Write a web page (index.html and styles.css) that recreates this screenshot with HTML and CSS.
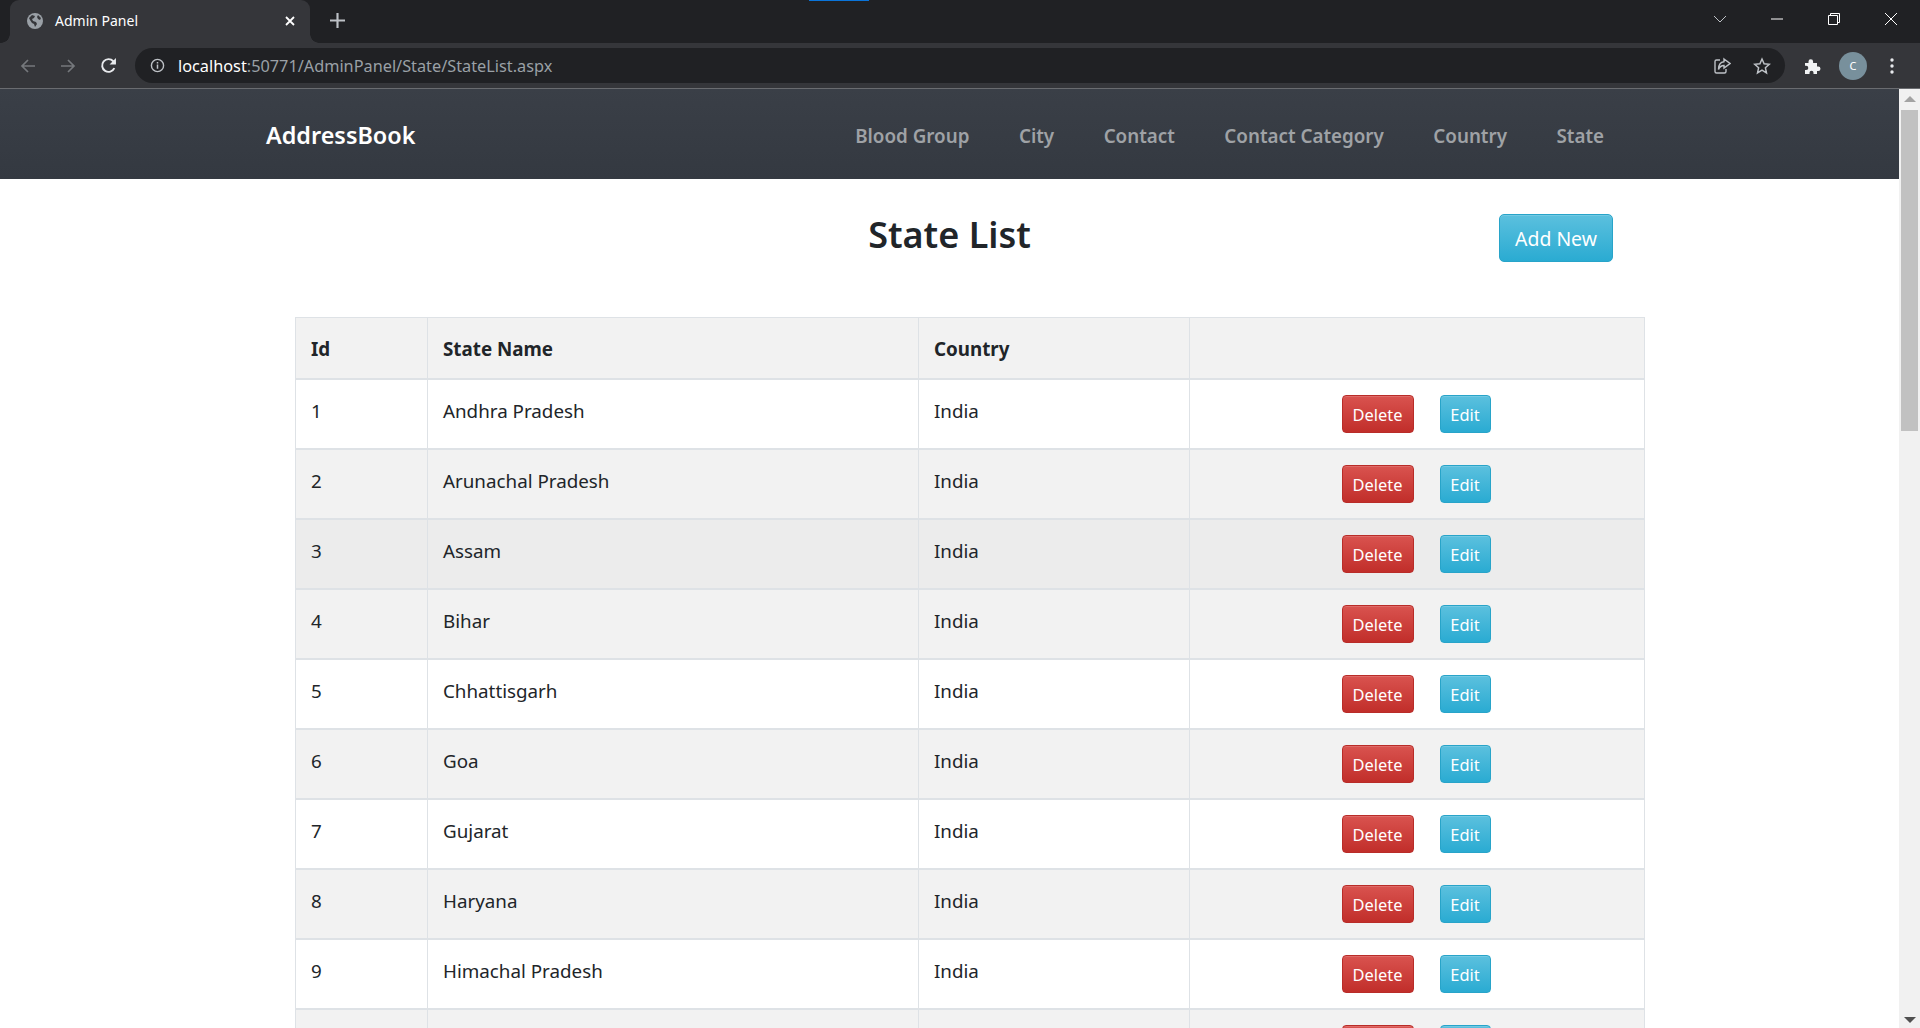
FILE: index.html
```html
<!DOCTYPE html>
<html lang="en">
<head>
<meta charset="utf-8">
<title>Admin Panel</title>
<link rel="stylesheet" href="styles.css">
</head>
<body>
<div class="browser">
  <div class="tabstrip">
    <div class="tab">
      <svg class="favicon" viewBox="0 0 16 16"><circle cx="8" cy="8" r="8" fill="#9aa0a6"/><path d="M2 5l3-3 3 1-1 2-2 1 1 2 3 1 1 2-2 3-1-3-2-1-2-3zM11 2l3 3-1 2-2-1-1-2z" fill="#35363a"/></svg>
      <span class="tab-title">Admin Panel</span>
      <svg class="tab-close" viewBox="0 0 12 12"><path d="M2 2l8 8M10 2l-8 8" stroke="#fff" stroke-width="1.8"/></svg>
    </div>
    <svg class="new-tab" viewBox="0 0 14 14"><path d="M7 0v14M0 7h14" stroke="#bdc1c6" stroke-width="2"/></svg>
    <div class="load-bar"></div>
    <div class="window-controls">
      <svg class="win chev" viewBox="0 0 14 8"><path d="M1 1l6 6 6-6" fill="none" stroke="#bdc1c6" stroke-width="1"/></svg>
      <svg class="win" viewBox="0 0 14 14"><path d="M1 7h12" stroke="#fff" stroke-width="1"/></svg>
      <svg class="win" viewBox="0 0 14 14"><path d="M3.500 3.500V1.500h9v9h-2M1.500 3.500h9v9h-9z" fill="none" stroke="#fff" stroke-width="1"/></svg>
      <svg class="win" viewBox="0 0 14 14"><path d="M1 1l12 12M13 1L1 13" stroke="#fff" stroke-width="1"/></svg>
    </div>
  </div>
  <div class="toolbar">
    <svg class="nav-icon back" viewBox="0 0 16 16"><path d="M15 8H2M8 2L2 8l6 6" fill="none" stroke="#75787c" stroke-width="1.700"/></svg>
    <svg class="nav-icon forward" viewBox="0 0 16 16"><path d="M1 8h13M8 2l6 6-6 6" fill="none" stroke="#75787c" stroke-width="1.700"/></svg>
    <svg class="nav-icon reload" viewBox="0 0 16 16"><path d="M13.500 10.500A6 6 0 1 1 12.500 4L14 5.500" fill="none" stroke="#e8eaed" stroke-width="1.800"/><path d="M15 1v6H9z" fill="#e8eaed"/></svg>
    <div class="omnibox">
      <svg class="info" viewBox="0 0 16 16"><circle cx="8" cy="8" r="6.500" fill="none" stroke="#bdc1c6" stroke-width="1.500"/><path d="M8 7v4.500M8 4.200v1.600" stroke="#bdc1c6" stroke-width="1.600"/></svg>
      <span class="url"><span class="host">localhost</span>:50771/AdminPanel/State/StateList.aspx</span>
      <svg class="omni-icon share" viewBox="0 0 18 18"><path d="M7 3H3.500A1.500 1.500 0 0 0 2 4.500v10A1.500 1.500 0 0 0 3.500 16h8a1.500 1.500 0 0 0 1.500-1.500V12" fill="none" stroke="#bdc1c6" stroke-width="1.400"/><path d="M11 2l6 4.500-6 4.500V8.500C8.500 8.500 6.500 10 5.500 12.500 5.500 8 7.500 5 11 4.700z" fill="none" stroke="#bdc1c6" stroke-width="1.400"/></svg>
      <svg class="omni-icon star" viewBox="0 0 18 18"><path d="M9 2l2.100 4.800 5.200.5-3.900 3.500 1.100 5.100L9 13.200l-4.500 2.700 1.100-5.100-3.900-3.500 5.200-.5z" fill="none" stroke="#bdc1c6" stroke-width="1.500"/></svg>
    </div>
    <svg class="puzzle" viewBox="0 0 18 18"><path d="M2 6h3.500V4.500a2.300 2.300 0 0 1 4.600 0V6h3.900v3.600h1.300a2.200 2.200 0 0 1 0 4.400H14v3H10.500v-1.300a2 2 0 0 0-4 0V17H2v-4h1.200a2.100 2.100 0 0 0 0-4.200H2z" fill="#f1f3f4"/></svg>
    <div class="avatar">C</div>
    <svg class="dots" viewBox="0 0 4 16"><circle cx="2" cy="2" r="1.700" fill="#e8eaed"/><circle cx="2" cy="8" r="1.700" fill="#e8eaed"/><circle cx="2" cy="14" r="1.700" fill="#e8eaed"/></svg>
  </div>
</div>
<div class="viewport">
  <main class="page">
    <nav class="navbar">
      <a class="brand">AddressBook</a>
      <ul class="nav-links">
        <li>Blood Group</li>
        <li>City</li>
        <li>Contact</li>
        <li>Contact Category</li>
        <li>Country</li>
        <li>State</li>
      </ul>
    </nav>
    <header class="page-head">
      <h1>State List</h1>
      <a class="btn btn-info btn-lg">Add New</a>
    </header>
    <table class="grid">
      <colgroup><col class="c-id"><col class="c-name"><col class="c-country"><col class="c-actions"></colgroup>
      <thead><tr><th>Id</th><th>State Name</th><th>Country</th><th></th></tr></thead>
      <tbody>
        <tr><td>1</td><td>Andhra Pradesh</td><td>India</td><td><div class="actions"><a class="btn btn-danger">Delete</a><a class="btn btn-info">Edit</a></div></td></tr>
        <tr><td>2</td><td>Arunachal Pradesh</td><td>India</td><td><div class="actions"><a class="btn btn-danger">Delete</a><a class="btn btn-info">Edit</a></div></td></tr>
        <tr class="hover"><td>3</td><td>Assam</td><td>India</td><td><div class="actions"><a class="btn btn-danger">Delete</a><a class="btn btn-info">Edit</a></div></td></tr>
        <tr><td>4</td><td>Bihar</td><td>India</td><td><div class="actions"><a class="btn btn-danger">Delete</a><a class="btn btn-info">Edit</a></div></td></tr>
        <tr><td>5</td><td>Chhattisgarh</td><td>India</td><td><div class="actions"><a class="btn btn-danger">Delete</a><a class="btn btn-info">Edit</a></div></td></tr>
        <tr><td>6</td><td>Goa</td><td>India</td><td><div class="actions"><a class="btn btn-danger">Delete</a><a class="btn btn-info">Edit</a></div></td></tr>
        <tr><td>7</td><td>Gujarat</td><td>India</td><td><div class="actions"><a class="btn btn-danger">Delete</a><a class="btn btn-info">Edit</a></div></td></tr>
        <tr><td>8</td><td>Haryana</td><td>India</td><td><div class="actions"><a class="btn btn-danger">Delete</a><a class="btn btn-info">Edit</a></div></td></tr>
        <tr><td>9</td><td>Himachal Pradesh</td><td>India</td><td><div class="actions"><a class="btn btn-danger">Delete</a><a class="btn btn-info">Edit</a></div></td></tr>
        <tr><td></td><td></td><td></td><td><div class="actions"><a class="btn btn-danger"></a><a class="btn btn-info"></a></div></td></tr>
      </tbody>
    </table>
  </main>
  <aside class="scrollbar">
    <span class="arrow up"></span>
    <span class="thumb"></span>
    <span class="arrow down"></span>
  </aside>
</div>
</body>
</html>
```

FILE: styles.css
```css
* { box-sizing: border-box; }
html, body { margin: 0; height: 100%; overflow: hidden; }
body {
  display: flex;
  flex-direction: column;
  height: 1028px;
  font-family: "Noto Sans", "Open Sans", sans-serif;
  color: #212529;
  background: #fff;
}

/* browser chrome */
.browser { flex: none; height: 89px; background: #35363a; border-bottom: 1px solid #6a6c70; }
.tabstrip { position: relative; height: 43px; background: #202124; display: flex; align-items: center; }
.tab {
  position: relative;
  width: 300px;
  height: 43px;
  margin-left: 10px;
  padding: 0 0 2px 17px;
  background: #35363a;
  border-radius: 9px 9px 0 0;
  display: flex;
  align-items: center;
  color: #fff;
  font-size: 14px;
}
.tab::before, .tab::after { content: ""; position: absolute; bottom: 0; width: 9px; height: 9px; }
.tab::before { left: -9px; background: radial-gradient(circle at 0 0, #202124 8.500px, #35363a 9px); }
.tab::after { right: -9px; background: radial-gradient(circle at 100% 0, #202124 8.500px, #35363a 9px); }
.favicon { width: 16px; height: 16px; }
.tab-title { margin-left: 12px; flex: 1; }
.tab-close { width: 12px; height: 12px; margin-right: 14px; }
.new-tab { width: 15px; height: 15px; margin: 0 0 2px 20px; }
.load-bar { position: absolute; left: 809px; top: 0; width: 60px; height: 1px; background: #0a74da; }
.window-controls { align-self: flex-start; margin-left: auto; display: flex; align-items: center; padding-right: 22px; gap: 43px; height: 37px; }
.win { width: 14px; height: 14px; }

.toolbar { height: 45px; display: flex; align-items: center; padding-left: 20px; }
.nav-icon { width: 16px; height: 16px; margin-right: 24px; }
.nav-icon.reload { width: 17px; height: 17px; margin-right: 18px; }
.omnibox {
  width: 1650px;
  height: 35px;
  border-radius: 18px;
  background: #202124;
  display: flex;
  align-items: center;
  padding-left: 15px;
}
.info { width: 15px; height: 15px; }
.url { margin-left: 13px; font-size: 16.3px; color: #9aa0a6; flex: 1; }
.host { color: #fff; }
.omni-icon { width: 18px; height: 18px; }
.omni-icon.share { margin-right: 22px; }
.omni-icon.star { margin-right: 14px; }
.puzzle { width: 18px; height: 18px; margin-left: 18px; }
.avatar {
  width: 28px; height: 28px; margin-left: 18px; border-radius: 50%;
  background: #78909c; color: #fff; font-size: 11px;
  display: flex; align-items: center; justify-content: center;
}
.dots { width: 4px; height: 16px; margin-left: 23px; }

/* page */
.viewport { flex: 1; display: flex; min-height: 0; }
.page { flex: 1; min-width: 0; overflow: hidden; }
.navbar {
  height: 90px;
  padding: 2px 295px 0 266px;
  background: linear-gradient(#3a3f47, #343941);
  display: flex;
  align-items: center;
  justify-content: space-between;
}
.brand { font-size: 23.4px; font-weight: 600; color: #fff; }
.nav-links { list-style: none; margin: 0; padding: 1px 0 0; display: flex; gap: 49.5px; font-size: 18.8px; font-weight: 600; color: #9fa2a6; }

.page-head {
  display: grid;
  grid-template-columns: 1fr auto 1fr;
  align-items: start;
  height: 138px;
  padding-top: 35px;
}
.page-head h1 { grid-column: 2; margin: -1px 0 0; font-size: 36px; line-height: 1.2; font-weight: 600; }
.page-head .btn { grid-column: 3; justify-self: end; margin-right: 286px; }

.btn {
  display: inline-flex;
  align-items: center;
  justify-content: center;
  height: 38px;
  padding-top: 1px;
  border-radius: 4px;
  border: 1px solid;
  color: #fff;
  font-size: 16.4px;
  box-shadow: inset 0 1px 0 rgba(255,255,255,.15);
}
.btn-info { width: 51px; background: linear-gradient(#5bc0de, #2aabd2); border-color: #28a4c9; }
.btn-danger { width: 72px; background: linear-gradient(#d9534f, #c12e2a); border-color: #b92c28; }
.btn-lg { width: 114px; height: 48px; font-size: 19.4px; border-radius: 5px; }

.grid {
  width: 1350px;
  margin-left: 295px;
  table-layout: fixed;
  border-collapse: separate;
  border-spacing: 0;
  font-size: 18.8px;
  line-height: 27px;
}
.c-id { width: 133px; }
.c-name { width: 491px; }
.c-country { width: 271px; }
.c-actions { width: 455px; }
.grid th, .grid td {
  border-right: 1px solid #dee2e6;
  border-bottom: 2px solid #dee2e6;
  text-align: left;
  vertical-align: top;
}
.grid th:first-child, .grid td:first-child { border-left: 1px solid #dee2e6; }
.grid th { height: 63px; padding: 18px 15px 13px; border-top: 1px solid #dee2e6; background: #f2f2f2; font-weight: 700; }
.grid td { height: 70px; padding: 18px 15px 12px; font-weight: 400; }
.grid td:last-child { padding: 15px; }
.grid tbody tr:nth-child(even) { background: #f2f2f2; }
.grid tbody tr.hover { background: #ececec; }
.actions { display: flex; justify-content: center; gap: 26px; padding-right: 2px; }

.scrollbar { flex: none; width: 21px; background: #f1f1f1; display: flex; flex-direction: column; align-items: center; }
.arrow { flex: none; width: 0; height: 0; border-left: 6px solid transparent; border-right: 6px solid transparent; }
.arrow.up { margin-top: 7px; border-bottom: 6px solid #a3a3a3; }
.arrow.down { margin-top: auto; margin-bottom: 5px; border-top: 6px solid #505050; }
.thumb { flex: none; width: 17px; height: 321px; margin-top: 8px; background: #c1c1c1; }
```
